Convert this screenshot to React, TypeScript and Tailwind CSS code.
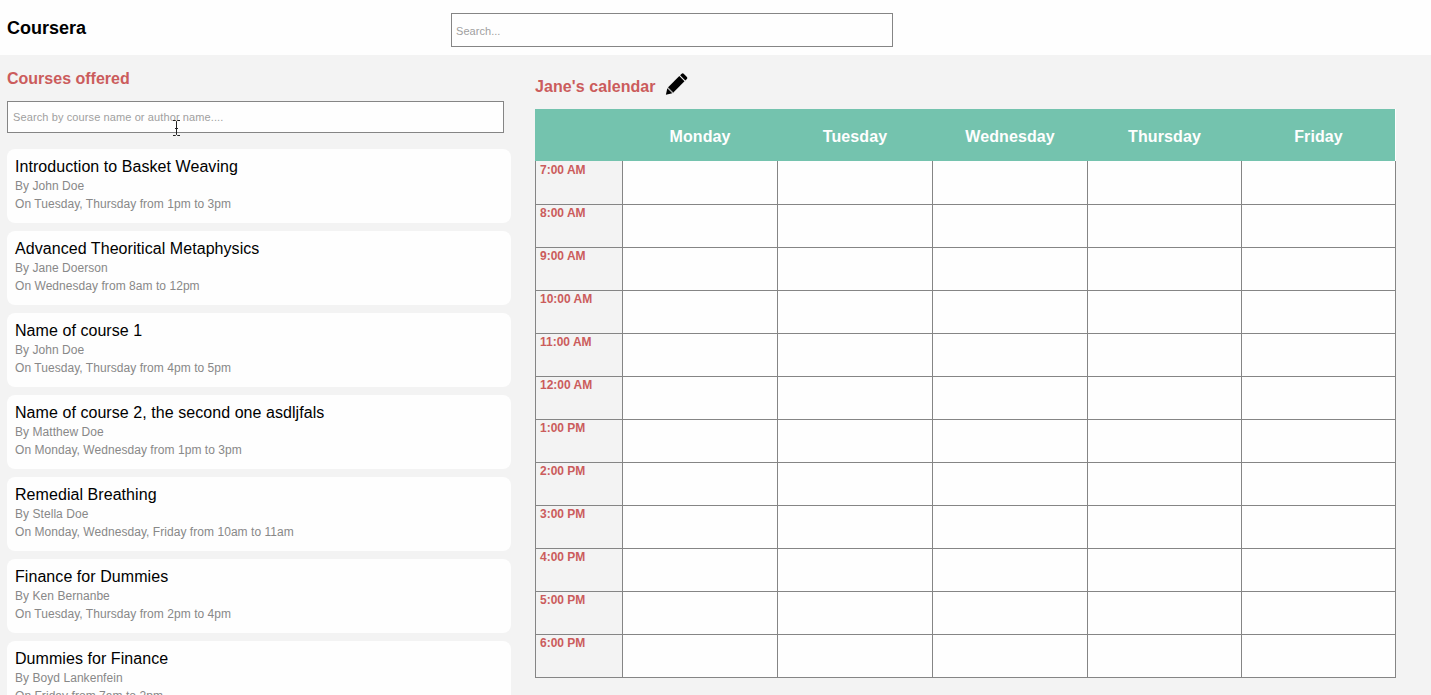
type Course = { name: string; author: string; schedule: string };

const courses: Course[] = [
  { name: "Introduction to Basket Weaving", author: "John Doe", schedule: "On Tuesday, Thursday from 1pm to 3pm" },
  { name: "Advanced Theoritical Metaphysics", author: "Jane Doerson", schedule: "On Wednesday from 8am to 12pm" },
  { name: "Name of course 1", author: "John Doe", schedule: "On Tuesday, Thursday from 4pm to 5pm" },
  { name: "Name of course 2, the second one asdljfals", author: "Matthew Doe", schedule: "On Monday, Wednesday from 1pm to 3pm" },
  { name: "Remedial Breathing", author: "Stella Doe", schedule: "On Monday, Wednesday, Friday from 10am to 11am" },
  { name: "Finance for Dummies", author: "Ken Bernanbe", schedule: "On Tuesday, Thursday from 2pm to 4pm" },
  { name: "Dummies for Finance", author: "Boyd Lankenfein", schedule: "On Friday from 7am to 2pm" },
];

const days = ["Monday", "Tuesday", "Wednesday", "Thursday", "Friday"];

const hours = [
  "7:00 AM", "8:00 AM", "9:00 AM", "10:00 AM", "11:00 AM", "12:00 AM",
  "1:00 PM", "2:00 PM", "3:00 PM", "4:00 PM", "5:00 PM", "6:00 PM",
];

const columns = "grid grid-cols-[87px_155px_155px_155px_154px_154px]";

function CourseCard({ course }: { course: Course }) {
  return (
    <li className="h-[74px] shrink-0 rounded-lg bg-[#fefefe] px-2 pt-2">
      <h3 className="text-[16px] leading-5 tracking-[0.06px] text-black">{course.name}</h3>
      <p className="text-[12px] leading-[18px] tracking-[0.05px] text-[#888]">By {course.author}</p>
      <p className="text-[12px] leading-[18px] tracking-[0.05px] text-[#888]">{course.schedule}</p>
    </li>
  );
}

function PencilIcon() {
  return (
    <svg viewBox="0 0 24 24" className="ml-2 h-6 w-6">
      <path d="M1.900 22.800 3.300 16.300 8.300 21.300Z" />
      <path d="M3.900 15.500 15.300 4.100 20.500 9.300 9.100 20.700Z" />
      <path d="M16.100 3.300 17.700 1.700Q18.700 .7 19.700 1.700L22.900 4.900Q23.900 5.900 22.900 6.900L21.300 8.500Z" />
      <path d="M3.900 15.500 9.100 20.700" stroke="#999" strokeWidth=".8" />
    </svg>
  );
}

function Calendar() {
  return (
    <div className="w-[861px]">
      <div className="border-r border-[#fefefe]">
        <div className={`${columns} h-[52px] w-[860px] items-center bg-[#74c3ae] pt-[3px]`}>
          <span />
          {days.map((day) => (
            <span key={day} className="pl-px text-center text-[16px] font-bold tracking-[0.1px] text-[#fefefe]">{day}</span>
          ))}
        </div>
      </div>
      <div className="border-l border-[#858585]">
        {hours.map((hour) => (
          <div key={hour} className={`${columns} group h-[43px] first:h-11`}>
            <div className="border-r border-b border-[#858585] bg-[#f3f3f3] pt-px pl-1 text-[12px] leading-[14px] font-bold text-[#cb5c5c] group-first:pt-[2px]">{hour}</div>
            {days.map((day) => (
              <div key={day} className="border-r border-b border-[#858585] bg-[#fefefe]" />
            ))}
          </div>
        ))}
      </div>
    </div>
  );
}

export default function App() {
  return (
    <div className="flex h-[695px] w-[1431px] flex-col overflow-hidden bg-[#f3f3f3] font-['Liberation_Sans',Arial,sans-serif]">
      <header className="flex h-[55px] shrink-0 bg-[#fefefe] pl-[7px]">
        <h1 className="w-[444px] pt-[17px] text-[18px] leading-[22px] font-bold">Coursera</h1>
        <input
          placeholder="Search..."
          className="mt-[13px] h-[34px] w-[442px] border border-[#858585] bg-[#fefefe] px-1 pt-[2px] text-[11px] tracking-[0.05px] outline-none placeholder:text-[#a0a0a0]"
        />
      </header>
      <main className="flex min-h-0 flex-1">
        <section className="ml-[7px] w-[504px] shrink-0">
          <h2 className="pt-[15px] text-[16px] leading-[18px] font-bold text-[#cb5c5c]">Courses offered</h2>
          <div className="relative mt-[13px] w-[497px]">
            <input
              placeholder="Search by course name or author name...."
              className="block h-8 w-full border border-[#858585] bg-[#fefefe] px-[5px] text-[11px] tracking-[0.11px] outline-none placeholder:text-[#a0a0a0]"
            />
            <svg viewBox="0 0 9 16" className="absolute top-[19px] left-[165px] h-4 w-[9px]" fill="none" stroke="#222">
              <path d="M1 .5h2.5l1 1 1-1H8M4.500 1.500v13M1 15.500h2.500l1-1 1 1H8M3 8.500h3" />
            </svg>
          </div>
          <ul className="mt-4 flex flex-col gap-2">
            {courses.map((course) => (
              <CourseCard key={course.name} course={course} />
            ))}
          </ul>
        </section>
        <section className="ml-6">
          <div className="flex h-[54px] pt-[17px]">
            <h2 className="pt-[6px] text-[16px] leading-[18px] font-bold tracking-[0.08px] text-[#cb5c5c]">Jane's calendar</h2>
            <PencilIcon />
          </div>
          <Calendar />
        </section>
      </main>
    </div>
  );
}
